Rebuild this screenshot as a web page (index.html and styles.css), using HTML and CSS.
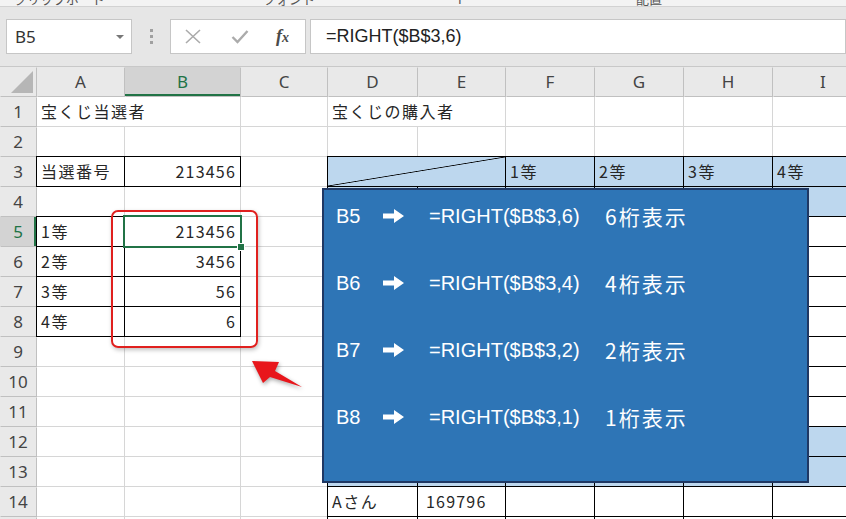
FILE: index.html
```html
<!DOCTYPE html>
<html lang="ja">
<head>
    <meta charset="UTF-8">
    <meta name="viewport" content="width=device-width, initial-scale=1.0">
    <title>宝くじ当選者 - RIGHT関数</title>
    <link rel="stylesheet" href="styles.css">
</head>
<body>
    <!-- Bottom edge of the ribbon -->
    <div class="ribbon-tail">
        <span class="rt-clip">クリップボード</span>
        <span class="rt-font">フォント</span>
        <span class="rt-mid">ｒ</span>
        <span class="rt-align">配置</span>
    </div>

    <!-- Formula bar -->
    <div class="formula-bar">
        <div class="name-box"><span>B5</span><i class="caret"></i></div>
        <div class="grip"><i></i><i></i><i></i></div>
        <div class="fx-box">
            <svg class="icon-cancel" viewBox="0 0 18 15"><path d="M2 1 L16 14 M16 1 L2 14"/></svg>
            <svg class="icon-enter" viewBox="0 0 18 15"><path d="M1.5 8 L6.5 13 L16.5 2"/></svg>
            <span class="fx">f<span class="fx-x">x</span></span>
        </div>
        <div class="formula-input">=RIGHT($B$3,6)</div>
    </div>

    <!-- Worksheet -->
    <div class="sheet">
        <div class="grid">
            <div class="ch corner"></div><div class="ch">A</div><div class="ch sel-col">B</div><div class="ch">C</div><div class="ch">D</div><div class="ch">E</div><div class="ch">F</div><div class="ch">G</div><div class="ch">H</div><div class="ch">I</div>

            <div class="rh">1</div><div class="c span2">宝くじ当選者</div><div class="c"></div><div class="c span2">宝くじの購入者</div><div class="c"></div><div class="c"></div><div class="c"></div><div class="c"></div>

            <div class="rh">2</div><div class="c"></div><div class="c"></div><div class="c"></div><div class="c"></div><div class="c"></div><div class="c"></div><div class="c"></div><div class="c"></div><div class="c"></div>

            <div class="rh">3</div><div class="c bd">当選番号</div><div class="c bd num">213456</div><div class="c"></div><div class="c span2 bd lb diag"></div><div class="c bd lb">1等</div><div class="c bd lb">2等</div><div class="c bd lb">3等</div><div class="c bd lb">4等</div>

            <div class="rh">4</div><div class="c"></div><div class="c"></div><div class="c"></div><div class="c bd lb"></div><div class="c bd lb"></div><div class="c bd lb"></div><div class="c bd lb"></div><div class="c bd lb"></div><div class="c bd lb"></div>

            <div class="rh sel-row">5</div><div class="c bd">1等</div><div class="c bd num active">213456</div><div class="c"></div><div class="c bd"></div><div class="c bd"></div><div class="c bd"></div><div class="c bd"></div><div class="c bd"></div><div class="c bd"></div>

            <div class="rh">6</div><div class="c bd">2等</div><div class="c bd num">3456</div><div class="c"></div><div class="c bd"></div><div class="c bd"></div><div class="c bd"></div><div class="c bd"></div><div class="c bd"></div><div class="c bd"></div>

            <div class="rh">7</div><div class="c bd">3等</div><div class="c bd num">56</div><div class="c"></div><div class="c bd"></div><div class="c bd"></div><div class="c bd"></div><div class="c bd"></div><div class="c bd"></div><div class="c bd"></div>

            <div class="rh">8</div><div class="c bd">4等</div><div class="c bd num">6</div><div class="c"></div><div class="c bd"></div><div class="c bd"></div><div class="c bd"></div><div class="c bd"></div><div class="c bd"></div><div class="c bd"></div>

            <div class="rh">9</div><div class="c"></div><div class="c"></div><div class="c"></div><div class="c bd"></div><div class="c bd"></div><div class="c bd"></div><div class="c bd"></div><div class="c bd"></div><div class="c bd"></div>

            <div class="rh">10</div><div class="c"></div><div class="c"></div><div class="c"></div><div class="c bd"></div><div class="c bd"></div><div class="c bd"></div><div class="c bd"></div><div class="c bd"></div><div class="c bd"></div>

            <div class="rh">11</div><div class="c"></div><div class="c"></div><div class="c"></div><div class="c bd"></div><div class="c bd"></div><div class="c bd"></div><div class="c bd"></div><div class="c bd"></div><div class="c bd"></div>

            <div class="rh">12</div><div class="c"></div><div class="c"></div><div class="c"></div><div class="c bd lb"></div><div class="c bd lb"></div><div class="c bd lb"></div><div class="c bd lb"></div><div class="c bd lb"></div><div class="c bd lb"></div>

            <div class="rh">13</div><div class="c"></div><div class="c"></div><div class="c"></div><div class="c bd lb"></div><div class="c bd lb"></div><div class="c bd lb"></div><div class="c bd lb"></div><div class="c bd lb"></div><div class="c bd lb"></div>

            <div class="rh">14</div><div class="c"></div><div class="c"></div><div class="c"></div><div class="c bd">Aさん</div><div class="c bd indent">169796</div><div class="c bd"></div><div class="c bd"></div><div class="c bd"></div><div class="c bd"></div>

            <!-- only the top edge of row 15 is in view -->
            <div class="rh"></div><div class="c"></div><div class="c"></div><div class="c"></div><div class="c bd"></div><div class="c bd"></div><div class="c bd"></div><div class="c bd"></div><div class="c bd"></div><div class="c bd"></div>
        </div>

        <!-- Annotations drawn over the sheet -->
        <div class="highlight-box"></div>
        <svg class="pointer" viewBox="246 353 62 40">
            <polygon points="252,361 279,362 275,371 302,387 270,377 263,383"/>
        </svg>

        <div class="note">
            <div class="note-line">
                <span class="note-cell">B5</span>
                <svg class="note-arrow" viewBox="0 0 21 14"><path d="M0 4.5 H11 V0 L21 7 L11 14 V9.5 H0 Z"/></svg>
                <span class="note-formula">=RIGHT($B$3,6)</span>
                <span class="note-digits">6桁表示</span>
            </div>
            <div class="note-line">
                <span class="note-cell">B6</span>
                <svg class="note-arrow" viewBox="0 0 21 14"><path d="M0 4.5 H11 V0 L21 7 L11 14 V9.5 H0 Z"/></svg>
                <span class="note-formula">=RIGHT($B$3,4)</span>
                <span class="note-digits">4桁表示</span>
            </div>
            <div class="note-line">
                <span class="note-cell">B7</span>
                <svg class="note-arrow" viewBox="0 0 21 14"><path d="M0 4.5 H11 V0 L21 7 L11 14 V9.5 H0 Z"/></svg>
                <span class="note-formula">=RIGHT($B$3,2)</span>
                <span class="note-digits">2桁表示</span>
            </div>
            <div class="note-line">
                <span class="note-cell">B8</span>
                <svg class="note-arrow" viewBox="0 0 21 14"><path d="M0 4.5 H11 V0 L21 7 L11 14 V9.5 H0 Z"/></svg>
                <span class="note-formula">=RIGHT($B$3,1)</span>
                <span class="note-digits">1桁表示</span>
            </div>
        </div>
    </div>
</body>
</html>
```

FILE: styles.css
```css
/* General */
* {
    box-sizing: border-box;
}

body {
    margin: 0;
    width: 846px;
    height: 519px;
    overflow: hidden;
    background: #e6e6e6;
    font-family: "Noto Sans CJK JP", sans-serif;
    color: #262626;
}

/* Ribbon edge */
.ribbon-tail {
    height: 7px;
    display: flex;
    overflow: hidden;
    background: #f3f3f3;
    border-bottom: 1px solid #d2d2d2;
    font-size: 13px;
    line-height: 13px;
    color: #555;
}

.ribbon-tail span {
    margin-top: -8px;
    white-space: nowrap;
}

.rt-clip {
    width: 263px;
    padding-left: 14px;
}

.rt-font {
    width: 192px;
}

.rt-mid {
    width: 181px;
}

/* Formula bar */
.formula-bar {
    height: 60px;
    display: flex;
    align-items: flex-start;
    padding-top: 12px;
    border-bottom: 1px solid #c8c8c8;
}

.name-box {
    width: 126px;
    height: 35px;
    margin-left: 6px;
    padding: 0 7px 0 8px;
    display: flex;
    align-items: center;
    justify-content: space-between;
    background: #fff;
    border: 1px solid #c6c6c6;
    font-family: "Noto Sans", sans-serif;
    font-size: 17px;
    color: #333;
}

.caret {
    border-left: 4px solid transparent;
    border-right: 4px solid transparent;
    border-top: 4px solid #777;
}

.grip {
    width: 38px;
    height: 35px;
    display: flex;
    flex-direction: column;
    align-items: center;
    justify-content: center;
    gap: 3px;
}

.grip i {
    width: 3px;
    height: 3px;
    background: #a0a0a0;
}

.fx-box {
    width: 136px;
    height: 35px;
    display: flex;
    align-items: center;
    padding-left: 13px;
    background: #fff;
    border: 1px solid #c6c6c6;
}

.fx-box svg {
    width: 18px;
    height: 15px;
    fill: none;
    stroke: #ababab;
}

.icon-cancel {
    stroke-width: 1.6;
}

.icon-enter {
    margin-left: 29px;
    stroke-width: 2.4;
}

.fx {
    margin-left: 27px;
    font-family: "Liberation Serif", serif;
    font-style: italic;
    font-weight: bold;
    font-size: 18px;
    color: #4a4a4a;
}

.fx-x {
    font-size: 14px;
}

.formula-input {
    flex: 1;
    height: 35px;
    margin-left: 4px;
    padding-left: 15px;
    background: #fff;
    border: 1px solid #c6c6c6;
    font-family: "Liberation Sans", sans-serif;
    font-size: 18px;
    line-height: 33px;
    color: #222;
}

/* Worksheet grid */
.sheet {
    position: relative;
}

.grid {
    display: grid;
    grid-template-columns: 36px 87px 115px 86px 89px 87px 88px 88px 88px 100px;
    grid-template-rows: repeat(15, 29px) 2px;
    gap: 1px;
    background: #d6d6d6;
}

.ch,
.rh {
    background: #e9e9e9;
    font-family: "Noto Sans", sans-serif;
    font-size: 17px;
    line-height: 29px;
    text-align: center;
    color: #444;
    box-shadow: 1px 1px 0 #c0c0c0;
}

.corner {
    position: relative;
}

.corner::after {
    content: "";
    position: absolute;
    left: 11px;
    top: 4px;
    width: 22px;
    height: 22px;
    background: #b6b6b6;
    clip-path: polygon(100% 0, 100% 100%, 0 100%);
}

.sel-col {
    background: #d3d3d3;
    color: #217346;
    box-shadow: inset 0 -2px 0 #217346, 1px 1px 0 #c0c0c0;
}

.sel-row {
    background: #d3d3d3;
    color: #217346;
    box-shadow: inset -2px 0 0 #217346, 1px 1px 0 #c0c0c0;
}

.c {
    background: #fff;
    padding: 0 4px;
    font-size: 16px;
    letter-spacing: 1.5px;
    line-height: 29px;
    white-space: nowrap;
}

.span2 {
    grid-column: span 2;
}

.num {
    text-align: right;
    letter-spacing: 1.2px;
}

.indent {
    padding-left: 8px;
    letter-spacing: 1.2px;
}

.bd {
    box-shadow: 0 0 0 1px #000;
}

.lb {
    background: #bdd7ee;
}

.diag {
    background: linear-gradient(to bottom right, #bdd7ee calc(50% - 0.8px), #000 50%, #bdd7ee calc(50% + 0.8px));
}

.active {
    position: relative;
    z-index: 2;
    box-shadow: 0 0 0 2px #217346;
}

.active::after {
    content: "";
    position: absolute;
    right: -5px;
    bottom: -5px;
    width: 6px;
    height: 6px;
    background: #217346;
    border: 1px solid #fff;
}

/* Annotations */
.highlight-box {
    position: absolute;
    left: 111px;
    top: 143px;
    width: 147px;
    height: 138px;
    border: 2px solid #e0201e;
    border-radius: 7px;
    box-shadow: 1px 2px 4px rgba(0, 0, 0, 0.25);
}

.pointer {
    position: absolute;
    left: 246px;
    top: 286px;
    width: 62px;
    height: 40px;
    fill: #e8161b;
    filter: drop-shadow(1px 2px 2px rgba(0, 0, 0, 0.35));
}

.note {
    position: absolute;
    left: 322px;
    top: 121px;
    width: 487px;
    height: 295px;
    padding: 11px 0 0 12px;
    display: flex;
    flex-direction: column;
    gap: 37px;
    background: #2e75b6;
    border: 2px solid #1f3864;
    color: #fff;
}

.note-line {
    height: 30px;
    display: flex;
    align-items: center;
    font-family: "Liberation Sans", sans-serif;
    font-size: 20px;
    white-space: nowrap;
}

.note-cell {
    width: 47px;
}

.note-arrow {
    width: 21px;
    height: 14px;
    margin-right: 25px;
    fill: #fff;
}

.note-formula {
    width: 176px;
}

.note-digits {
    font-family: "Noto Sans CJK JP", sans-serif;
    font-size: 21px;
    letter-spacing: 2px;
}
```
